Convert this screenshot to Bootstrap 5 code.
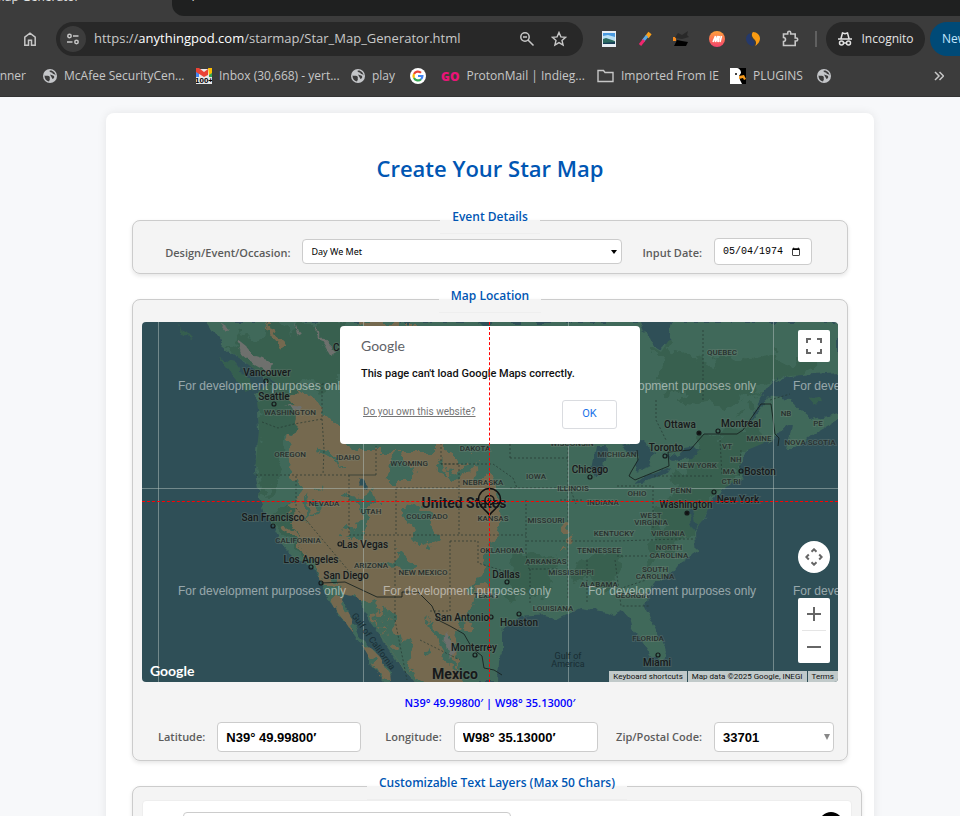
<!DOCTYPE html>
<html lang="en">
<head>
<meta charset="utf-8">
<meta name="viewport" content="width=device-width, initial-scale=1">
<title>Star Map Generator</title>
<link href="https://cdn.jsdelivr.net/npm/bootstrap@5.3.0/dist/css/bootstrap.min.css" rel="stylesheet">
<style>
  body { font-family: "Open Sans", "Noto Sans", sans-serif; background: #f7f8fa; }
  svg { display: block; flex-shrink: 0; }

  /* browser frame */
  .browser { background: #3c3c3c; color: #c7c7c7; height: 97px; border-bottom: 1px solid #333; }
  .tabstrip { height: 16px; }
  .tab-on { width: 172px; font-size: 12px; line-height: 16px; color: #e3e3e3; }
  .tab-on span { margin: -11px 0 0 -6px; }
  .tab-rest { background: #1f2020; border-bottom-left-radius: 12px; padding-left: 16px; }
  .tab-rest span { margin-top: -12px; line-height: 16px; font-size: 18px; }
  .toolbar { height: 46px; padding-left: 20px; font-size: 12px; }
  .toolbar > * { flex-shrink: 0; }
  .tool { background: none; border: 0; padding: 0; color: #c7c7c7; display: flex; }
  .omnibox { width: 527px; height: 34px; border-radius: 17px; background: #282828; margin-left: 16px; padding: 0 16px 0 4px; }
  .site-chip { width: 26px; height: 26px; border-radius: 50%; background: #3c3c3c; align-items: center; justify-content: center; }
  .url { color: #c9c9c9; font-size: 13px; }
  .url b { font-weight: 400; color: #fff; }
  .extensions { margin-left: 18px; gap: 20px; }
  .incog { width: 99px; height: 34px; border-radius: 17px; background: #282828; color: #e3e3e3; margin-left: 9px; font-size: 12px; }
  .update { height: 34px; border-radius: 17px; background: #004a77; color: #c2e7ff; margin-left: 5px; padding: 0 12px; border: 0; font-size: 12px; white-space: nowrap; }
  .bookmarks { height: 28px; font-size: 12px; }
  .bookmarks a { color: #c7c7c7; text-decoration: none; display: flex; align-items: center; gap: 7px; white-space: nowrap; flex-shrink: 0; }
  .bm0 { width: 26px; justify-content: flex-end; }
  .bm1 { margin-left: 17px; width: 137px; }
  .bm2 { margin-left: 16px; width: 139px; }
  .bm3 { margin-left: 16px; width: 43px; }
  .bm4 { margin-left: 16px; }
  .bm5 { margin-left: 15px; width: 134px; }
  .bm6 { margin-left: 22px; width: 118px; }
  .bm7 { margin-left: 15px; width: 70px; }
  .bm8 { margin-left: 17px; }
  .go { font: 900 12px "Open Sans", sans-serif; color: #eb1478; }
  .count { font: 700 8px/9px "Liberation Sans", sans-serif; }

  /* page */
  .stage { padding-left: 20px; }
  .sheet { width: 80vw; margin: 16px auto 0; padding: 38px 26px 0; background: #fff; border-radius: 8px; box-shadow: 0 0 10px rgba(0,0,0,.08); }
  h1 { font-size: 22px; line-height: 34px; font-weight: 600; color: #0056b3; margin-bottom: 22px; }
  .group { border: 1px solid #ccc; border-radius: 8px; background: #f4f4f4; padding: 0 9px 8px; margin-bottom: 12px; box-shadow: 0 2px 4px rgba(0,0,0,.1); }
  .group legend { float: none; width: auto; margin: 0 auto; padding: 0 12px 6px; font-size: 12px; line-height: 20px; font-weight: 600; color: #0056b3; border-bottom: 1px solid #eee; }
  .group-wide { margin-right: -14px; }
  .group label { font-size: 11px; font-weight: 600; color: #5c5c5c; margin-right: 12px; }
  .field { border: 1px solid #ccc; border-radius: 4px; background-color: #fff; color: #000; }
  .event-row { padding-right: 26px; }
  .pick { width: 320px; height: 25px; padding: 0 8px; margin-right: 20px; font: 9px "Noto Sans", sans-serif; appearance: none;
    background: #fff url("data:image/svg+xml,%3Csvg xmlns='http://www.w3.org/2000/svg' viewBox='0 0 6 4'%3E%3Cpath d='M0 0h6L3 4z'/%3E%3C/svg%3E") no-repeat right 4px center / 6px 4px; }
  .date { width: 98px; height: 27px; padding: 0 8px; font: 10px "Liberation Mono", monospace; }
  .coord { width: 144px; height: 30px; padding: 0 8px; font: 700 13px "Liberation Sans", sans-serif; }
  .zip { width: 120px; appearance: none;
    background: #fff url("data:image/svg+xml,%3Csvg xmlns='http://www.w3.org/2000/svg' viewBox='0 0 6 6'%3E%3Cpath d='M0 0h6L3 6z' fill='%23888'/%3E%3C/svg%3E") no-repeat right 3px center / 6px 6px; }
  .readout { color: #00f; font-size: 11px; line-height: 18px; font-weight: 600; margin: 12px 0 10px; }

  /* map */
  .map-box { margin-top: 9px; height: 360px; border-radius: 4px; background: #2f4f57; font-family: Roboto, sans-serif; }
  .city { font: 500 10px Roboto, sans-serif; fill: #17191a; stroke: #6c7a70; stroke-opacity: .35; stroke-width: 2px; paint-order: stroke; text-anchor: middle; }
  .nation { font: 700 14px Roboto, sans-serif; }
  .state { font: 500 8px Roboto, sans-serif; fill: #28302e; stroke: #7d8a80; stroke-opacity: .3; stroke-width: 2px; paint-order: stroke; text-anchor: middle; }
  .sea { font: 9px Roboto, sans-serif; fill: #182d33; text-anchor: middle; }
  .wm { font: 12px "Liberation Sans", sans-serif; fill: #fff; fill-opacity: .5; }
  .cross-h { left: 0; right: 0; top: 179px; border-top: 1px dashed #f00; }
  .cross-v { top: 0; bottom: 0; left: 50%; margin-left: -1px; border-left: 1px dashed #f00; }
  .notice { top: 4px; left: 50%; width: 300px; height: 118px; margin-left: -150px; padding: 10px 19px 0 21px; background: #fff; border-radius: 4px; color: #111; }
  .notice p { font-size: 11px; line-height: 18px; font-weight: 500; margin: 9px 0 17px; }
  .brand { font: 14px/20px Lato, sans-serif; color: #5f6368; }
  .notice a { font-size: 10px; line-height: 12px; color: #757575; padding-left: 2px; margin-bottom: 5px; }
  .notice button { width: 55px; height: 29px; font-size: 11px; color: #1a73e8; background: #fff; border: 1px solid #dadce0; border-radius: 3px; }
  .map-btn { right: 8px; width: 32px; background: #fff; border: 0; border-radius: 2px; padding: 0; color: #666; }
  .map-btn svg { margin: auto; }
  .full { top: 8px; height: 32px; }
  .pan { top: 219px; height: 32px; border-radius: 50%; }
  .zooms { top: 276px; height: 65px; }
  .zooms button { background: none; border: 0; padding: 0; height: 32px; width: 32px; color: #666; }
  .zooms hr { margin: 0 4px; color: #999; }
  .map-logo { left: 8px; bottom: 1px; font: 700 14px/20px Lato, sans-serif; color: #fff; }
  .terms { right: 0; bottom: 0; gap: 1px; font-size: 8px; line-height: 11px; }
  .terms a { background: #c1caca; color: #111; text-decoration: none; padding: 0 4px; }

  .layer { background: #fff; border: 1px solid #eee; border-radius: 4px; height: 60px; padding: 11px 4px 0 40px; }
  .layer-text { width: 328px; height: 28px; }
  .layer-font { width: 95px; height: 26px; margin-left: 45px; }
  .layer-size { width: 48px; height: 26px; margin-left: 13px; }
  .swatch { width: 24px; height: 24px; border-radius: 50%; border: 0; background: #000; margin-left: auto; margin-right: 4px; }
</style>
<script src="https://cdn.jsdelivr.net/npm/bootstrap@5.3.0/dist/js/bootstrap.bundle.min.js"></script>
</head>
<body class="vh-100 overflow-hidden d-flex flex-column">
<svg width="0" height="0" class="position-absolute" aria-hidden="true">
  <symbol id="globe" viewBox="0 0 14 14"><circle cx="7" cy="7" r="7" fill="#c4c6c9"/><path d="M1.500 6.500C3 7.500 5.500 6 6.500 7.500S6 9 7 10l-1 2.500C3 12 1.500 9.500 1.500 6.500zM6 2c1 0 1 1.500 2.500 1.500S9 5 10.500 5s1.500 1.500 2 1.500C12.500 4 10 1.500 7.500 1.500zM7 5.500l3 1c2 .5 1.500 3-.500 3.500z" fill="#3c3c3c"/></symbol>
</svg>

<header class="browser flex-shrink-0 overflow-hidden">
  <div class="tabstrip d-flex overflow-hidden">
    <div class="tab-on d-flex"><span>Map Generator</span></div>
    <div class="tab-rest d-flex flex-grow-1"><span>+</span></div>
  </div>
  <div class="toolbar d-flex align-items-center">
    <button class="tool" aria-label="Home"><svg width="20" height="20" viewBox="0 0 20 20" fill="none" stroke="currentColor" stroke-width="1.500"><path d="M4.800 8.200 10 4.200l5.200 4v8h-3.700v-5h-3v5H4.800z"/></svg></button>
    <div class="omnibox d-flex align-items-center">
      <button class="tool site-chip" aria-label="Site information"><svg width="14" height="14" viewBox="0 0 14 14" fill="none" stroke="currentColor" stroke-width="1.500"><circle cx="3.500" cy="4" r="1.700"/><path d="M7 4h5.500M1 10h5.500"/><circle cx="10.500" cy="10" r="1.700"/></svg></button>
      <div class="url flex-grow-1 ms-2 text-nowrap">https://<b>anythingpod.com</b>/starmap/Star_Map_Generator.html</div>
      <button class="tool me-3" aria-label="Zoom"><svg width="16" height="16" viewBox="0 0 16 16" fill="none" stroke="currentColor" stroke-width="1.500"><circle cx="6" cy="6" r="4.200"/><path d="M9 9l5.500 5.500M4 6h4"/></svg></button>
      <button class="tool" aria-label="Bookmark"><svg width="16" height="16" viewBox="0 0 16 16" fill="none" stroke="currentColor" stroke-width="1.400"><path d="M8 1.500l1.900 4.400 4.700.4-3.600 3.100 1.100 4.700L8 11.600l-4.100 2.500L5 9.400 1.400 6.300l4.700-.4z"/></svg></button>
    </div>
    <div class="extensions d-flex align-items-center">
      <svg width="16" height="16" viewBox="0 0 16 16"><path fill="#e8eef4" d="M1 0h14v16H1z"/><path fill="#4a9ae0" d="M2 2h12v7H2z"/><path fill="#b9e0f5" d="M2 5l5-1 7 2v3H2z"/><path fill="#2c6b62" d="M2 8l3-1 9 3v3H2z"/><path fill="#173d57" d="M2 12l12-1v2H2z"/></svg>
      <svg width="16" height="16" viewBox="0 0 16 16"><path stroke="#f9a01b" stroke-width="4" d="M10 6l3-4"/><path stroke="#5aa9e6" stroke-width="3" d="M6 10l4-5"/><path stroke="#f0266f" stroke-width="3" d="M3 14l4-5"/></svg>
      <svg width="16" height="16" viewBox="0 0 16 16"><path fill="#f68b1e" d="M0 6h3v4H0z"/><path fill="#000" d="M1 15l3-6 5 1 6 1-2 4z"/><path fill="#292929" d="M3 5l2-3 4 2 6-4-1 4 2 2-7 2-7-1z"/></svg>
      <svg width="16" height="16" viewBox="0 0 16 16"><defs><linearGradient id="mi" x2="0" y2="1"><stop stop-color="#ffa33a"/><stop offset="1" stop-color="#f3426e"/></linearGradient></defs><circle cx="8" cy="8" r="8" fill="url(#mi)"/><path d="M4 11l2.500-6v6L9 5v6l1.500-6M12.500 5L11 11" fill="none" stroke="#fff" stroke-width="1.600"/></svg>
      <svg width="16" height="16" viewBox="0 0 16 16"><path fill="#25396b" d="M7 2C3 2 1 5 1 8s3 7 7 7c3-3 1-5-1-7s-2-4 0-6z"/><path fill="#f99b12" d="M8 1c4 0 7 3 7 6.500S12 14 10 15c2-3 1-5-1-7S6 3 8 1z"/></svg>
      <button class="tool" aria-label="Extensions"><svg width="18" height="18" viewBox="0 0 18 18" fill="none" stroke="currentColor" stroke-width="1.600"><path d="M2.500 4h4.200V2.800a1.500 1.500 0 0 1 3 0V4h4.500v4h1a1.500 1.500 0 0 1 0 3h-1v4.500H2.500v-4a2 2 0 0 0 0-4z"/></svg></button>
    </div>
    <svg width="2" height="16" class="ms-3"><path d="M1 0v16" stroke="#606060" stroke-width="2"/></svg>
    <div class="incog d-flex align-items-center justify-content-center gap-2"><svg width="16" height="16" viewBox="0 0 16 16" fill="none" stroke="currentColor" stroke-width="1.500"><path d="M1 8h14M4 7.500L5.500 2l2.500.8 2.500-.8L12 7.500"/><circle cx="4.500" cy="12" r="2"/><circle cx="11.500" cy="12" r="2"/><path d="M6.500 12h3"/></svg>Incognito</div>
    <button class="update">New Chrome</button>
  </div>
  <nav class="bookmarks d-flex align-items-center" aria-label="Bookmarks">
    <a href="#" class="bm0">anner</a>
    <a href="#" class="bm1"><svg width="14" height="14"><use href="#globe"/></svg>McAfee SecurityCen...</a>
    <a href="#" class="bm2"><svg width="16" height="16" viewBox="0 0 16 16"><path fill="#e8e8e8" d="M0 1h16v15H0z"/><path fill="#4285f4" d="M0 3h3v6H0z"/><path fill="#34a853" d="M13 4h3v5h-3z"/><path fill="#fbbc04" d="M12 0h4v5l-3 2z"/><path fill="#ea4335" d="M0 0l3 0 5 4 4-3v6L8 9 0 4z"/><text x="8" y="15" text-anchor="middle" class="count">100+</text></svg>Inbox (30,668) - yert...</a>
    <a href="#" class="bm3"><svg width="14" height="14"><use href="#globe"/></svg>play</a>
    <a href="#" class="bm4" aria-label="Google"><svg width="16" height="16" viewBox="0 0 16 16"><circle cx="8" cy="8" r="8" fill="#fff"/><g fill="none" stroke-width="2.200"><path stroke="#ea4335" d="M4 6a4.400 4.400 0 0 1 7-1.200"/><path stroke="#fbbc04" d="M4 6a4.600 4.600 0 0 0 0 4"/><path stroke="#34a853" d="M4 10a4.400 4.400 0 0 0 7 1.200"/><path stroke="#4285f4" d="M8 8h4.400a4.400 4.400 0 0 1-1.400 3.200"/></g></svg></a>
    <a href="#" class="bm5"><span class="go">GO</span>ProtonMail | Indieg...</a>
    <a href="#" class="bm6"><svg width="17" height="14" viewBox="0 0 17 14" fill="none" stroke="currentColor" stroke-width="1.400"><path d="M1 12.500V1.500h5.500l1.500 2h8v9z"/></svg>Imported From IE</a>
    <a href="#" class="bm7"><svg width="16" height="16" viewBox="0 0 16 16"><path d="M0 0h16v16H0z"/><path fill="#fff" d="M0 0h6c3 0 5 2 5 5l-2 3 1 4 2 4H0z"/><path fill="#f59a1c" d="M9 8l5-1 2 4-2 1-1-2-4 1z"/><circle cx="6" cy="6" r="1"/></svg>PLUGINS</a>
    <a href="#" class="bm8" aria-label="Bookmark"><svg width="14" height="14"><use href="#globe"/></svg></a>
    <button class="tool ms-auto me-3" aria-label="More bookmarks"><svg width="10" height="10" viewBox="0 0 10 10" fill="none" stroke="currentColor" stroke-width="1.500"><path d="M1 1l4 4-4 4M5.500 1l4 4-4 4"/></svg></button>
  </nav>
</header>

<main class="stage flex-grow-1 overflow-hidden">
  <form class="sheet">
    <h1 class="text-center">Create Your Star Map</h1>

    <fieldset class="group">
      <legend>Event Details</legend>
      <div class="event-row d-flex align-items-center justify-content-end pt-1">
        <label for="occasion" class="pt-1">Design/Event/Occasion:</label>
        <select id="occasion" class="field pick"><option>Day We Met</option></select>
        <label for="day" class="pt-1">Input Date:</label>
        <input id="day" type="date" class="field date" value="1974-05-04">
      </div>
    </fieldset>

    <fieldset class="group">
      <legend>Map Location</legend>
      <div class="map-box position-relative overflow-hidden">
        <svg width="100%" height="100%" viewBox="142 322 696 360" preserveAspectRatio="xMidYMid slice" role="img" aria-label="Map of the United States">
          <defs>
            <filter id="rough" x="-5%" y="-5%" width="110%" height="110%"><feTurbulence type="fractalNoise" baseFrequency=".09" numOctaves="3" seed="4"/><feDisplacementMap in="SourceGraphic" scale="9" xChannelSelector="R" yChannelSelector="G"/></filter>
            <filter id="ragged" x="-5%" y="-5%" width="110%" height="110%"><feTurbulence type="fractalNoise" baseFrequency=".06" numOctaves="4" seed="9"/><feDisplacementMap in="SourceGraphic" scale="34" xChannelSelector="R" yChannelSelector="G"/></filter>
            <clipPath id="land"><path id="coast" d="M206 322L222 345 230 352 245 362 262 375 268 385 256 393 258 410 259 430 255 470 258 490 259 500 268 520 275 530 285 548 293 556 305 562 313 570 322 585 327 594 334 608 345 622 355 635 362 645 368 655 368 665 378 675 385 682 391 682 390 673 380 657 360 637 350 615 342 600 343 594 358 598 370 621 393 653 403 668 415 682H497L498 660 502 652 502 632 510 625 520 617 545 615 558 619 570 613 580 608 607 612 613 615 623 610 630 618 633 630 643 643 652 657 662 664 666 653 662 640 653 623 645 607 648 593 657 583 673 572 680 563 697 552 695 533 697 527 705 517 710 503 715 493 733 483 743 477 738 467 747 450 776 438 780 430 792 425 787 450 794 450 820 430 838 420V413L812 420 803 413 790 399 772 397 761 395 772 382 790 376 838 372V322H672L669 340 661 352 650 345 640 322z"/></clipPath>
          </defs>
          <g filter="url(#rough)"><use href="#coast" fill="#41695a"/><path fill="#365e50" d="M220 358l16 4 19 28-8 3z M177 322l16 16-8-2z M808 397l11-1 4 6-9 2z"/></g>
          <g clip-path="url(#land)">
            <g filter="url(#ragged)" fill="#38604f">
              <path d="M225 345L300 322 345 322 345 390 300 380 290 440 262 500 255 470 262 400 240 375z M265 515l30 40 15 5-20-50z M650 340l60 25 60-10 50 10-50 20-40 25-60-10z M700 440l50-15 20 20-30 20-40 70-40 20-20 20 15-50z M515 550l40 10-5 30-40 10z M570 570l40-20 20 10-20 30z"/>
            </g>
            <g filter="url(#ragged)" fill="#75694f">
              <path d="M297 390l20 12 10 20 35 30 90 0 40 25 10 40-18 60-20 50-5 50 10 60H405L380 620 362 600 345 592 325 575 314 565 305 550 290 520 298 480 290 445z"/>
              <path d="M327 596l20 35 30 45 20 20-5-20-35-45-14-36z M280 525l25 35 5-3-20-30z M560 535l12-8-6 22z M270 322l14 25-8-3z M350 322h60v50z M420 340l60 5v30z"/>
            </g>
            <g filter="url(#ragged)" fill="#41695a">
              <path d="M405 505l25 5 10 30-20 10-12-20z M345 495l20-8 15 20-25 35-8 0 12-30z M390 478l25 0-8-24-20 0z M380 610l12 10 10 30 25 40-15 5-25-40z M395 550l25 14-5 6-30-4z M430 620l20 20 10 35-22-20z M315 445l30 20-18-5z M310 490l10 20-6 5z M440 470l40-10 0 12-25 8z"/>
            </g>
            <g filter="url(#rough)" fill="#6e706d"><path d="M236 338l10 8 8 10 20 6-3 12-18-10-12-10z M220 322l12 8-4 2z M312 326l25 26-6 4z M282 404l24 2-6 4z M447 630l8 20-6 8-4-12z M296 322l5 14-3-2z"/></g>
            <g filter="url(#rough)" fill="#2f4f57"><path d="M596 446l10 0-2 25-8 8-4-10z M622 446l20-6 12 12-4 14-12 4-2-14z M636 484l12-10 22-8-4 6-20 10z M664 454l8 6 20-2 8-8-4-4-12 2-6 8z M748 425l20-40 10-8-10 20z M360 478l8 10-4 2-6-6z M266 376l10 6-2 20-3-20z M478 322h14l-4 10z M688 502l6 14 4 20-6-12z"/></g>
          </g>
          <g fill="none" stroke="#24352f" stroke-opacity=".65" stroke-dasharray="2 2">
            <path d="M262 422l16 6 16-4 28-5V384M270 384H340M322 419l2 30-1 26M256 475H376V446M296 476v32l52 62M349 475v60M349 535H526M376 475h-27M396 488v48M396 488h63V464h-18v-20M441 464h52l20 14 4 10M459 488v46M450 541v70h-22M450 541h28v22l32 10M526 500v55l3 14h30M510 488h60l6 16M510 458h58M510 458v-18M568 444v80M527 541h90l60-2h18M530 569v35M568 540v60M587 560v42M615 560l6 46h28M616 590l30-10M617 486h36v44M654 476h60M656 400v20l10 20M703 400V330M617 556h40M720 440l2 36M741 450l-2 28M770 400l20-6M395 540v80l12 60M420 640l40 20M560 500h24"/>
          </g>
          <g fill="none" stroke="#15201d" stroke-opacity=".85">
            <path d="M321 583l24-1 32 15h25v-5h16l14 14 6 14 12 6 14 8 8 14 10 8 2 12 10 2 8 5M637 450l1 10-7 12-2 4 6 4 34-14-1-14 22-2 14-16h33l6-4 18-26 10 0 4 30 4 4-1 8"/>
          </g>
          <g stroke="#b5c4bf" stroke-opacity=".5"><path d="M158.500 322v360M363.500 322v360M568.500 322v360M773.500 322v360M142 488.500h696"/></g>
          <g fill="none" stroke="#15191a" stroke-width="1.200">
            <circle cx="266" cy="381" r="2"/><circle cx="274" cy="404" r="2"/><circle cx="273" cy="526" r="2"/><circle cx="340" cy="544" r="2"/><circle cx="311" cy="567" r="2"/><circle cx="321" cy="583" r="2"/><circle cx="507" cy="582" r="2"/><circle cx="519" cy="614" r="2"/><circle cx="491" cy="617" r="2"/><circle cx="475" cy="655" r="2"/><circle cx="658" cy="655" r="2"/><circle cx="687" cy="513" r="2" fill="#111"/><circle cx="714" cy="492" r="2"/><circle cx="741" cy="471" r="2"/><circle cx="718" cy="431" r="2"/><circle cx="699" cy="433" r="2" fill="#111"/><circle cx="665" cy="456" r="2"/><circle cx="590" cy="477" r="2"/>
          </g>
          <g class="state">
            <text x="290" y="415">WASHINGTON</text><text x="290" y="457">OREGON</text><text x="348" y="460">IDAHO</text><text x="324" y="506">NEVADA</text><text x="409" y="466">WYOMING</text><text x="475" y="451">DAKOTA</text><text x="483" y="485">NEBRASKA</text><text x="536" y="479">IOWA</text><text x="573" y="491">ILLINOIS</text><text x="722" y="355">QUEBEC</text><text x="786" y="416">NB</text><text x="818" y="426">PE</text><text x="810" y="445">NOVA SCOTIA</text><text x="759" y="441">MAINE</text><text x="617" y="457">MICHIGAN</text><text x="572" y="446">WISCONSIN</text><text x="727" y="449">VT</text><text x="736" y="462">NH</text><text x="697" y="468">NEW YORK</text><text x="729" y="474">MA</text><text x="731" y="484">CT RI</text><text x="681" y="493">PENN</text><text x="637" y="496">OHIO</text><text x="603" y="505">INDIANA</text><text x="371" y="514">UTAH</text><text x="427" y="519">COLORADO</text><text x="298" y="543">CALIFORNIA</text><text x="371" y="568">ARIZONA</text><text x="423" y="575">NEW MEXICO</text><text x="493" y="521">KANSAS</text><text x="546" y="523">MISSOURI</text><text x="502" y="553">OKLAHOMA</text><text x="546" y="564">ARKANSAS</text><text x="571" y="575">MISSISSIPPI</text><text x="599" y="553">TENNESSEE</text><text x="614" y="536">KENTUCKY</text><text x="599" y="587">ALABAMA</text><text x="486" y="598">TEXAS</text><text x="553" y="611">LOUISIANA</text><text x="651" y="518">WEST</text><text x="651" y="525">VIRGINIA</text><text x="668" y="536">VIRGINIA</text><text x="669" y="550">NORTH</text><text x="669" y="558">CAROLINA</text><text x="655" y="572">SOUTH</text><text x="655" y="579">CAROLINA</text><text x="632" y="598">GEORGIA</text><text x="648" y="641">FLORIDA</text>
          </g>
          <g class="city">
            <text x="267" y="376">Vancouver</text><text x="274" y="400">Seattle</text><text x="350" y="351">Calgary</text><text x="590" y="473">Chicago</text><text x="680" y="428">Ottawa</text><text x="741" y="427">Montreal</text><text x="666" y="451">Toronto</text><text x="760" y="475">Boston</text><text x="738" y="503">New York</text><text x="686" y="508">Washington</text><text x="273" y="521">San Francisco</text><text x="365" y="548">Las Vegas</text><text x="311" y="563">Los Angeles</text><text x="346" y="579">San Diego</text><text x="506" y="578">Dallas</text><text x="519" y="626">Houston</text><text x="462" y="621">San Antonio</text><text x="474" y="651">Monterrey</text><text x="657" y="666">Miami</text>
            <text class="nation" x="464" y="508">United States</text><text class="nation" x="455" y="679">Mexico</text>
          </g>
          <g class="sea"><text x="568" y="659">Gulf of</text><text x="568" y="667">America</text><text transform="translate(371 643) rotate(54)">Gulf of California</text></g>
          <g class="wm"><text x="178" y="390">For development purposes only</text><text x="383" y="390">For development purposes only</text><text x="588" y="390">For development purposes only</text><text x="793" y="390">For development purposes only</text><text x="178" y="595">For development purposes only</text><text x="383" y="595">For development purposes only</text><text x="588" y="595">For development purposes only</text><text x="793" y="595">For development purposes only</text></g>
          <g fill="none" stroke="#111" stroke-width="1.500"><path d="M489.500 515c-3-5-11-8-11-15.500a11 11 0 0 1 22 0c0 7.500-8 10.500-11 15.500z"/><circle cx="489.500" cy="500" r="4.500"/></g>
        </svg>
        <div class="notice position-absolute">
          <div class="brand">Google</div>
          <p>This page can't load Google Maps correctly.</p>
          <div class="d-flex justify-content-between align-items-center"><a href="#">Do you own this website?</a><button type="button" class="me-1">OK</button></div>
        </div>
        <div class="cross-h position-absolute"></div>
        <div class="cross-v position-absolute"></div>
        <button type="button" class="map-btn full position-absolute" aria-label="Full screen"><svg width="16" height="16" viewBox="0 0 16 16" fill="none" stroke="currentColor" stroke-width="2"><path d="M1 5V1h4M11 1h4v4M15 11v4h-4M5 15H1v-4"/></svg></button>
        <button type="button" class="map-btn pan position-absolute" aria-label="Map camera controls"><svg width="18" height="18" viewBox="0 0 18 18" fill="none" stroke="currentColor" stroke-width="2"><path d="M6.500 3.800L9 1.300l2.500 2.500M6.500 14.200L9 16.700l2.500-2.500M3.800 6.500L1.300 9l2.500 2.500M14.200 6.500L16.700 9l-2.500 2.500"/></svg></button>
        <div class="map-btn zooms position-absolute d-flex flex-column">
          <button type="button" aria-label="Zoom in"><svg width="14" height="14" viewBox="0 0 14 14"><path d="M7 0v14M0 7h14" stroke="currentColor" stroke-width="2"/></svg></button>
          <hr>
          <button type="button" aria-label="Zoom out"><svg width="14" height="14" viewBox="0 0 14 14"><path d="M0 7h14" stroke="currentColor" stroke-width="2"/></svg></button>
        </div>
        <div class="map-logo position-absolute">Google</div>
        <div class="terms position-absolute d-flex"><a href="#">Keyboard shortcuts</a><a href="#">Map data ©2025 Google, INEGI</a><a href="#">Terms</a></div>
      </div>
      <div class="readout text-center">N39° 49.99800′ | W98° 35.13000′</div>
      <div class="d-flex align-items-center ps-3 pe-1">
        <div class="d-flex align-items-center"><label for="lat">Latitude:</label><input id="lat" class="field coord" value="N39° 49.99800′"></div>
        <div class="d-flex align-items-center ms-4"><label for="lon">Longitude:</label><input id="lon" class="field coord" value="W98° 35.13000′"></div>
        <div class="d-flex align-items-center ms-auto"><label for="zip">Zip/Postal Code:</label><select id="zip" class="field coord zip"><option>33701</option></select></div>
      </div>
    </fieldset>

    <fieldset class="group group-wide">
      <legend>Customizable Text Layers (Max 50 Chars)</legend>
      <div class="layer d-flex">
        <input class="field layer-text" aria-label="Text">
        <select class="field layer-font mt-1" aria-label="Font"></select>
        <select class="field layer-size mt-1" aria-label="Size"></select>
        <button type="button" class="swatch" aria-label="Colour"></button>
      </div>
    </fieldset>
  </form>
</main>
</body>
</html>
